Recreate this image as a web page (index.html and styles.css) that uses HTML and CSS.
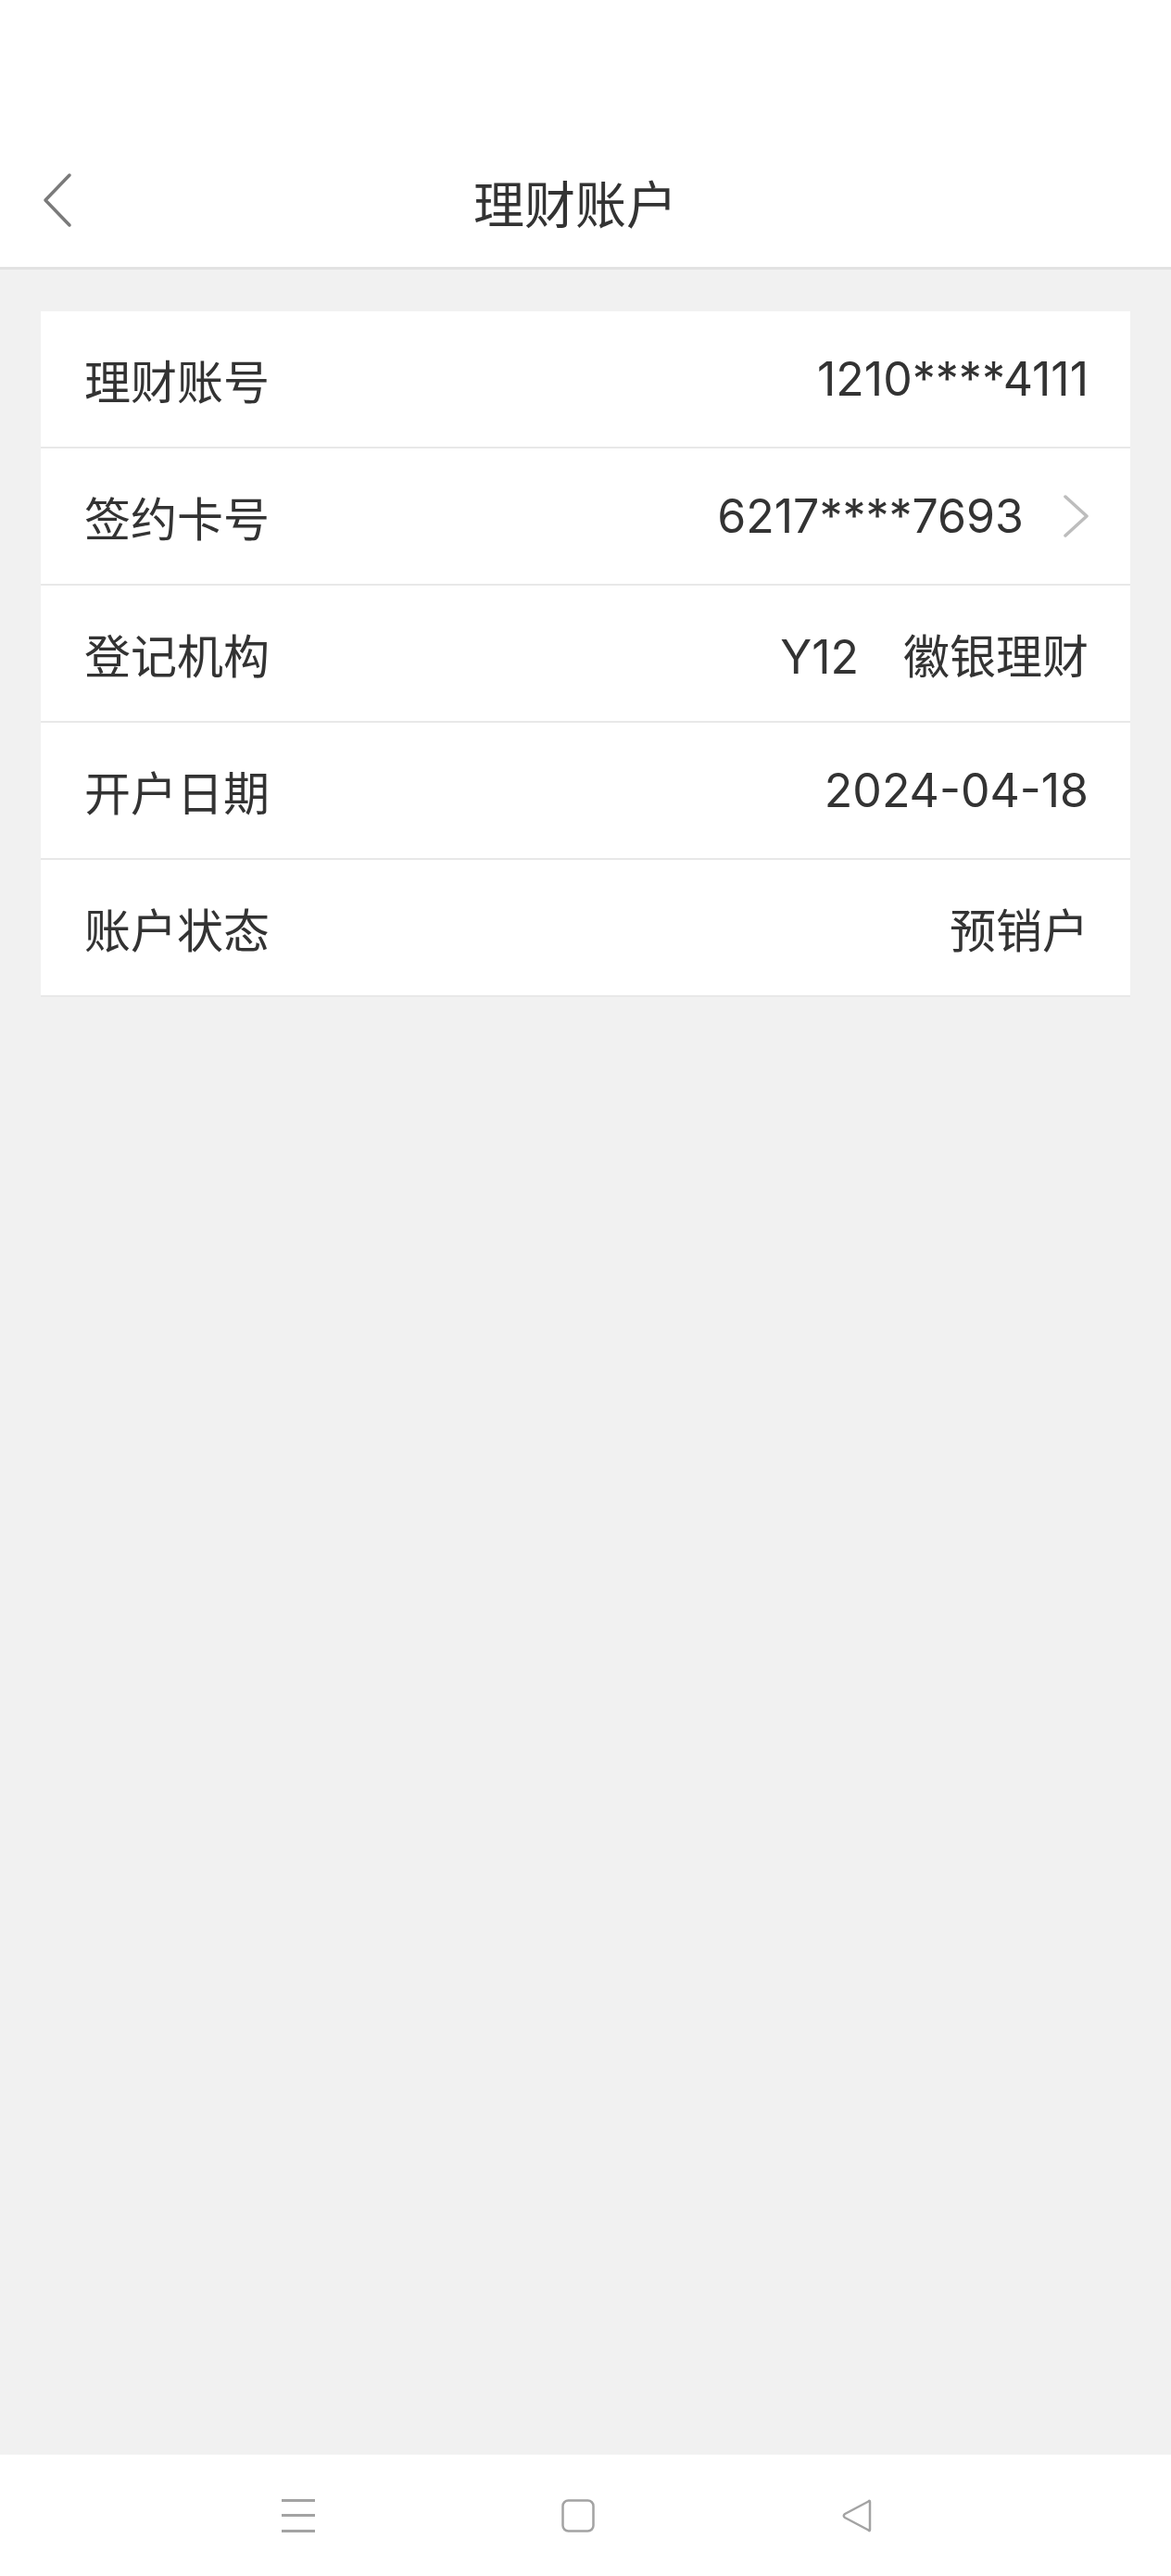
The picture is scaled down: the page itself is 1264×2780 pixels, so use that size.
FILE: index.html
```html
<!DOCTYPE html>
<html lang="zh-CN">
<head>
  <meta charset="UTF-8">
  <meta name="viewport" content="width=device-width, initial-scale=1.0">
  <title>理财账户</title>
  <link rel="stylesheet" href="styles.css">
</head>
<body>
  <div class="page">
    <header class="header">
      <div class="title-bar">
        <a class="back" href="#">
          <svg width="36" height="60" viewBox="0 0 36 60">
            <polyline points="31,3 5,30 31,57" fill="none" stroke="#7a7a7a" stroke-width="3.5" stroke-linecap="round" stroke-linejoin="round"/>
          </svg>
        </a>
        <h1 class="title">理财账户</h1>
      </div>
    </header>

    <main class="main">
      <ul class="info-list">
        <li class="info-item">
          <span class="label">理财账号</span>
          <span class="value">1210****4111</span>
        </li>
        <li class="info-item">
          <span class="label">签约卡号</span>
          <span class="value">6217****7693</span>
          <svg class="arrow" width="28" height="46" viewBox="0 0 28 46">
            <polyline points="3,2 26,23 3,44" fill="none" stroke="#bdbdbd" stroke-width="3.5" stroke-linecap="round" stroke-linejoin="round"/>
          </svg>
        </li>
        <li class="info-item">
          <span class="label">登记机构</span>
          <span class="value"><span class="code">Y12</span>徽银理财</span>
        </li>
        <li class="info-item">
          <span class="label">开户日期</span>
          <span class="value">2024-04-18</span>
        </li>
        <li class="info-item">
          <span class="label">账户状态</span>
          <span class="value">预销户</span>
        </li>
      </ul>
    </main>

    <nav class="nav-bar">
      <svg width="36" height="36" viewBox="0 0 36 36">
        <rect x="0" y="0" width="36" height="3" fill="#a3a3a3"/>
        <rect x="0" y="16" width="36" height="3" fill="#a3a3a3"/>
        <rect x="0" y="33" width="36" height="3" fill="#a3a3a3"/>
      </svg>
      <svg width="36" height="36" viewBox="0 0 36 36">
        <rect x="1.5" y="1.5" width="33" height="33" rx="6" fill="none" stroke="#a3a3a3" stroke-width="2.5"/>
      </svg>
      <svg width="36" height="36" viewBox="0 0 36 36">
        <path d="M31 3 L31 33 Q31 35 29.5 33.5 L4 20 Q1.5 18 4 16 L29.5 2.5 Q31 1 31 3 Z" fill="none" stroke="#a3a3a3" stroke-width="2.5" stroke-linejoin="round"/>
      </svg>
    </nav>
  </div>
</body>
</html>
```

FILE: styles.css
```css
*{
  margin: 0;
  padding: 0;
  box-sizing: border-box;
}
body{
  background-color: #f1f1f1;
  font-family: "Noto Sans CJK SC", "Noto Sans", sans-serif;
  color: #333;
}
.page{
  display: flex;
  flex-direction: column;
  min-height: 2780px;
}
.header{
  background-color: #fff;
  padding-top: 145px;
  border-bottom: 3px solid #e2e2e2;
}
.title-bar{
  height: 143px;
  display: flex;
  align-items: center;
  justify-content: center;
  padding-right: 22px;
  position: relative;
}
.back{
  position: absolute;
  left: 44px;
  top: 41px;
  display: flex;
}
.title{
  font-size: 55px;
  font-weight: normal;
  color: #333;
}
.main{
  flex: 1;
  padding: 45px 44px 0;
}
.info-list{
  list-style: none;
  background-color: #fff;
}
.info-item{
  height: 148px;
  display: flex;
  align-items: center;
  padding: 0 45px 0 47px;
  border-bottom: 2px solid #e8e8e8;
  font-size: 50px;
}
.label{
  flex: 1;
}
.value{
  font-family: Inter, "Noto Sans CJK SC", sans-serif;
  color: #333;
}
.code{
  margin-right: 48px;
}
.arrow{
  margin-left: 42px;
}
.nav-bar{
  height: 131px;
  background-color: #fff;
  display: flex;
  align-items: center;
  justify-content: center;
  gap: 266px;
  padding-right: 16px;
}
```
